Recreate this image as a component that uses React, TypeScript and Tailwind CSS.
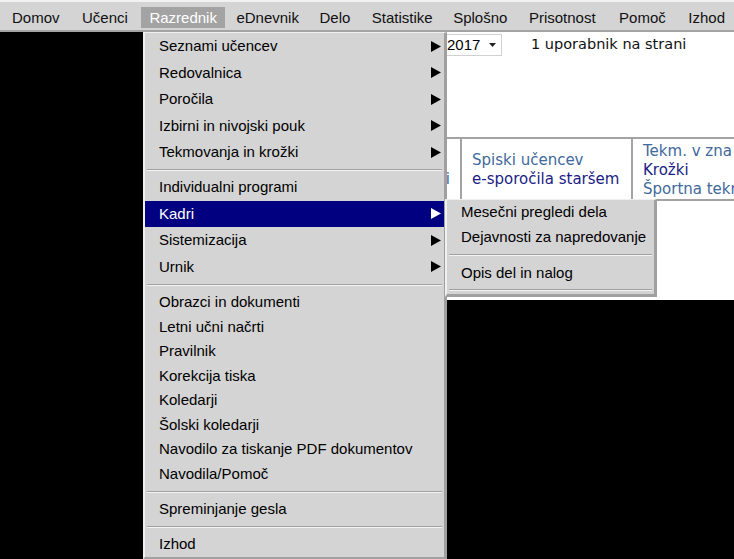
import React from 'react';

function Tri({ color }: { color: string }) {
  return (
    <svg width="10" height="11" viewBox="0 0 10 11" className="shrink-0">
      <path d="M0 0L10 5.5L0 11Z" fill={color} />
    </svg>
  );
}

function MenuItem({ label, arrow, active, tall }: { label: string; arrow?: boolean; active?: boolean; tall?: boolean }) {
  return (
    <div
      className={`flex items-center justify-between pl-[14px] pr-[3px] whitespace-nowrap ${tall ? 'h-[26.5px]' : 'h-[24.5px]'} ${
        active ? 'bg-[#000080] text-white' : 'text-black'
      }`}
    >
      <span>{label}</span>
      {arrow ? <Tri color={active ? '#ffffff' : '#000000'} /> : null}
    </div>
  );
}

function Sep({ h }: { h: string }) {
  return (
    <div className={`${h} flex items-center px-[2px]`}>
      <div className="w-full h-[2px] border-t border-t-[#a0a0a0] border-b border-b-[#f4f4f4]" />
    </div>
  );
}

const navItems: { n: string; ml: string }[] = [
  { n: 'Domov', ml: 'ml-0' },
  { n: 'Učenci', ml: 'ml-[6.5px]' },
  { n: 'Razrednik', ml: 'ml-[5.5px]' },
  { n: 'eDnevnik', ml: 'ml-[3.5px]' },
  { n: 'Delo', ml: 'ml-[4.5px]' },
  { n: 'Statistike', ml: 'ml-[5.5px]' },
  { n: 'Splošno', ml: 'ml-[4.5px]' },
  { n: 'Prisotnost', ml: 'ml-[5.5px]' },
  { n: 'Pomoč', ml: 'ml-[7.5px]' },
  { n: 'Izhod', ml: 'ml-[6.5px]' },
];

export default function App() {
  return (
    <div className="relative w-[734px] h-[559px] overflow-hidden bg-black font-['Liberation_Sans',Arial,sans-serif] text-[15px]">
      {/* top navigation */}
      <div className="h-[32px] bg-[#d4d4d4] border-t-2 border-t-[#f2f2f2] border-b-2 border-b-[#a3a3a3] flex items-start pt-[5px] pl-[4px] whitespace-nowrap">
        {navItems.map(({ n, ml }) => (
          <div
            key={n}
            className={`${ml} h-[21px] leading-[21px] px-[8px] ${n === 'Razrednik' ? 'bg-[#a3a3a3] text-white' : 'text-[#111]'}`}
          >
            {n}
          </div>
        ))}
      </div>

      {/* page body */}
      <div className="flex h-[527px]">
        <div className="w-[430px] bg-black" />
        <div className="flex-1 flex flex-col min-w-0">
          <div className="h-[268px] bg-white overflow-hidden">
            <div className="pl-[16px] pt-[2px] flex items-center">
              <div className="w-[56px] h-[22px] border border-[#d0d0d0] flex items-center text-black">
                <span>2017</span>
                <svg width="7" height="4" viewBox="0 0 7 4" className="ml-[9px]">
                  <path d="M0 0L7 0L3.5 4Z" fill="#222" />
                </svg>
              </div>
              <span className="ml-[29px] font-['DejaVu_Sans',Verdana,sans-serif] text-[14.5px] text-[#111] whitespace-nowrap">
                1 uporabnik na strani
              </span>
            </div>

            <div className="mt-[81px] flex border-t-2 border-b-2 border-[#a3a3a3] font-['DejaVu_Sans',Verdana,sans-serif] text-[15px] leading-[19px] whitespace-nowrap">
              <div className="w-[32px] border-r-2 border-[#a3a3a3] flex flex-col items-end justify-center pr-[10px] pt-[2px] text-[#41699b]">
                <span>&nbsp;</span>
                <span>i</span>
              </div>
              <div className="w-[171px] border-r-2 border-[#a3a3a3] flex flex-col justify-center pl-[10px] pt-[2px]">
                <span className="text-[#41699b]">Spiski učencev</span>
                <span className="text-[#1c1c84]">e-sporočila staršem</span>
              </div>
              <div className="flex-1 min-w-0 overflow-hidden flex flex-col pl-[10px] pt-[3px]">
                <span className="text-[#41699b]">Tekm. v zna</span>
                <span className="text-[#1c1c84]">Krožki</span>
                <span className="text-[#41699b]">Športna tekm</span>
              </div>
            </div>
          </div>
          <div className="flex-1 bg-black" />
        </div>
      </div>

      {/* dropdown menu */}
      <div className="absolute left-[143px] top-[32px] w-[304px] h-[527px] bg-[#d4d4d4] border-t border-l-2 border-r-[3px] border-b-2 border-t-[#f0f0f0] border-l-[#f0f0f0] border-r-[#a0a0a0] border-b-[#a0a0a0]">
        <MenuItem label="Seznami učencev" arrow tall />
        <MenuItem label="Redovalnica" arrow tall />
        <MenuItem label="Poročila" arrow tall />
        <MenuItem label="Izbirni in nivojski pouk" arrow tall />
        <MenuItem label="Tekmovanja in krožki" arrow tall />
        <Sep h="h-[8.5px]" />
        <MenuItem label="Individualni programi" tall />
        <MenuItem label="Kadri" arrow active tall />
        <MenuItem label="Sistemizacija" arrow tall />
        <MenuItem label="Urnik" arrow tall />
        <Sep h="h-[10px]" />
        <MenuItem label="Obrazci in dokumenti" />
        <MenuItem label="Letni učni načrti" />
        <MenuItem label="Pravilnik" />
        <MenuItem label="Korekcija tiska" />
        <MenuItem label="Koledarji" />
        <MenuItem label="Šolski koledarji" />
        <MenuItem label="Navodilo za tiskanje PDF dokumentov" />
        <MenuItem label="Navodila/Pomoč" />
        <Sep h="h-[11px]" />
        <MenuItem label="Spreminjanje gesla" />
        <Sep h="h-[10.5px]" />
        <MenuItem label="Izhod" />
      </div>

      {/* submenu */}
      <div className="absolute left-[445px] top-[199px] w-[212px] h-[98px] bg-[#d4d4d4] border-t border-l-2 border-r-[3px] border-b-[3px] border-t-[#f0f0f0] border-l-[#f0f0f0] border-r-[#a0a0a0] border-b-[#a0a0a0]">
        <MenuItem label="Mesečni pregledi dela" />
        <MenuItem label="Dejavnosti za napredovanje" />
        <Sep h="h-[12px]" />
        <MenuItem label="Opis del in nalog" />
        <Sep h="h-[8.5px]" />
      </div>
    </div>
  );
}
